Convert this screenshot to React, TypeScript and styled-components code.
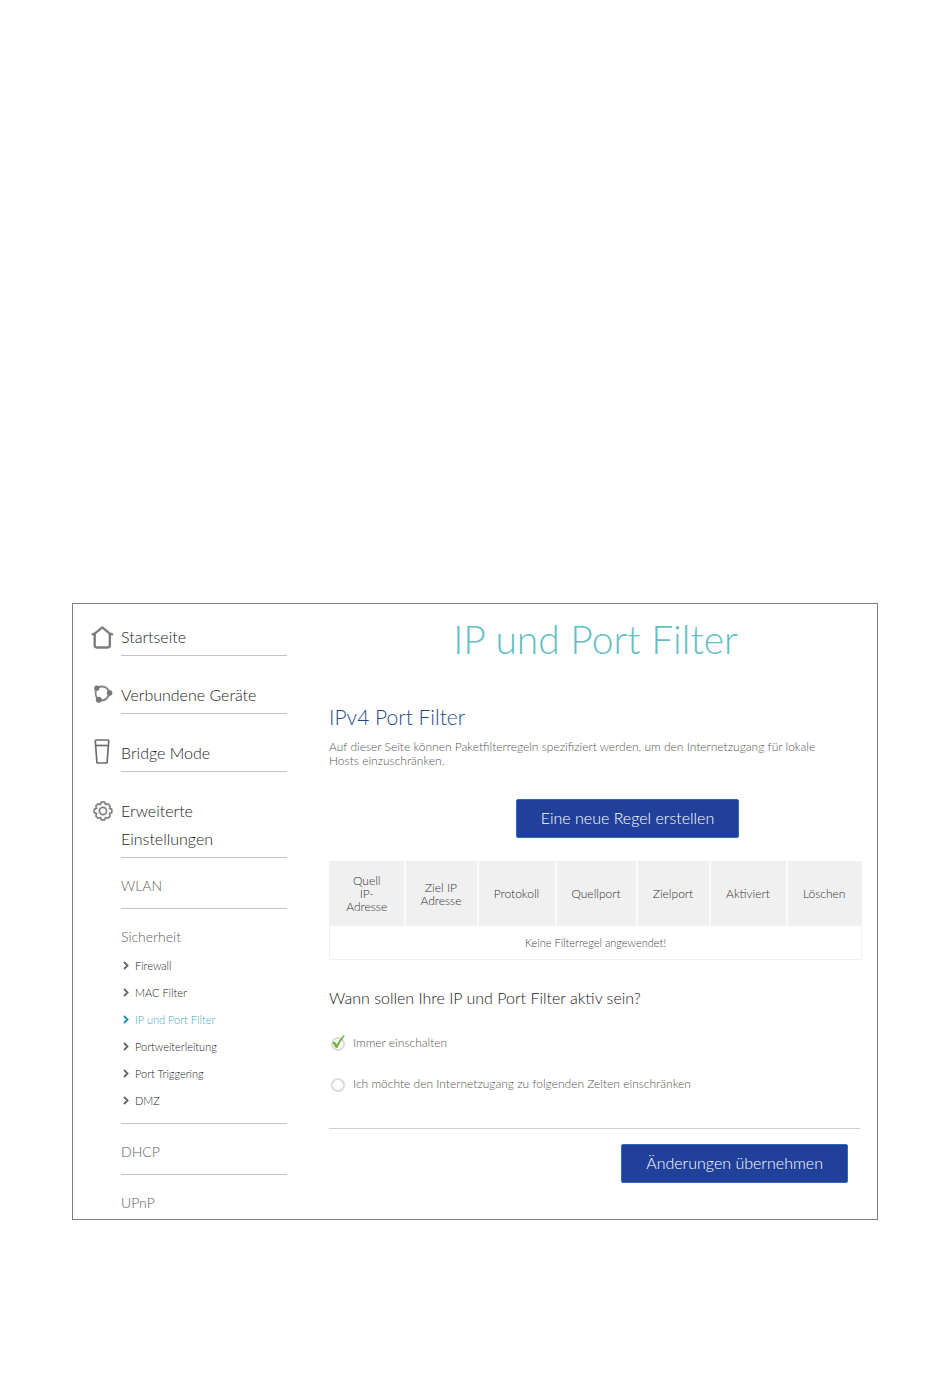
import React from "react";
import styled, { createGlobalStyle } from "styled-components";

const GlobalStyle = createGlobalStyle`
  * { box-sizing: border-box; }
  body {
    margin: 0;
    background: #fff;
    color: #333;
    font-family: Lato, "Open Sans", sans-serif;
    font-weight: 300;
  }
`;

const Page = styled.div`
  padding: 603px 72px 172px;
`;

const Frame = styled.div`
  display: grid;
  grid-template-columns: 196px minmax(0, 1fr);
  column-gap: 42px;
  padding: 0 15px 0 18px;
  border: 1px solid #808084;
`;

const Sidebar = styled.nav`
  padding: 19px 0 2px;
`;

const List = styled.ul`
  margin: 0;
  padding: 0;
  list-style: none;
`;

const SubList = styled(List)`
  padding: 1px 0;
`;

const NavItem = styled.li`
  display: grid;
  grid-template-columns: 24px minmax(0, 1fr);
  column-gap: 6px;
  margin-bottom: 25px;

  &:last-child {
    margin-bottom: 0;
  }
`;

const IconSlot = styled.span`
  display: flex;
  justify-content: center;
  align-items: center;
  height: 28px;
`;

const NavLink = styled.a`
  display: block;
  padding-bottom: 4px;
  border-bottom: 1px solid #c4c4c4;
  color: #222;
  font-size: 16px;
  line-height: 28px;
  text-decoration: none;
`;

const SectionItem = styled.li`
  margin-top: 14px;
  padding-bottom: 8px;
  border-bottom: 1px solid #c4c4c4;

  &:last-child {
    padding-bottom: 0;
    border-bottom: 0;
  }
`;

const SectionLink = styled.a`
  display: block;
  color: #606060;
  font-size: 14px;
  line-height: 28px;
  text-decoration: none;
`;

const SubLink = styled.a<{ $active?: boolean }>`
  display: flex;
  align-items: center;
  gap: 6px;
  padding-left: 2px;
  color: ${(p) => (p.$active ? "#3fabc4" : "#222")};
  font-size: 11px;
  line-height: 27px;
  text-decoration: none;

  svg {
    color: ${(p) => (p.$active ? "#1f8fb0" : "#666")};
  }
`;

const Main = styled.main`
  min-width: 0;
`;

const Title = styled.h1`
  margin: 0;
  padding-top: 8px;
  color: #62c0c4;
  font-size: 39px;
  font-weight: 300;
  line-height: 54px;
  text-align: center;
`;

const SectionTitle = styled.h2`
  margin: 36px 0 0;
  color: #1f4a86;
  font-size: 21px;
  font-weight: 300;
  line-height: 30px;
`;

const Intro = styled.p`
  margin: 8px 0 0;
  padding-right: 20px;
  color: #555;
  font-size: 12px;
  line-height: 14px;
`;

const CreateBar = styled.div`
  display: flex;
  justify-content: center;
  padding: 31px 14px 0 78px;
`;

const ApplyBar = styled.div`
  display: flex;
  justify-content: flex-end;
  padding: 15px 14px 0;
`;

const Button = styled.button`
  height: 39px;
  padding: 0 24px 2px;
  border: 1px solid #2a6cc4;
  border-radius: 2px;
  background: #21409a;
  color: #fff;
  font: inherit;
  font-size: 16px;
  white-space: nowrap;
`;

const Table = styled.table`
  width: 100%;
  margin-top: 23px;
  border: 1px solid #f0f0f0;
  border-collapse: collapse;
  table-layout: fixed;
`;

const HeadCell = styled.th`
  height: 64px;
  padding: 0 14px;
  border-right: 2px solid #fafafa;
  background: #f0f0f0;
  color: #333;
  font-size: 12px;
  font-weight: 300;
  line-height: 13px;
  white-space: pre-line;

  &:last-child {
    border-right: 0;
  }
`;

const EmptyCell = styled.td`
  height: 34px;
  padding: 0;
  color: #444;
  font-size: 11px;
  text-align: center;
`;

const Question = styled.fieldset`
  margin: 24px 0 0;
  padding: 0;
  border: 0;
`;

const Legend = styled.legend`
  padding: 0;
  color: #222;
  font-size: 16px;
  line-height: 28px;
`;

const Option = styled.label`
  display: grid;
  grid-template-columns: 18px minmax(0, 1fr);
  column-gap: 6px;
  align-items: center;
  margin-top: 21px;
  color: #555;
  font-size: 12px;
  line-height: 20px;
`;

const RadioBox = styled.span`
  position: relative;
  display: flex;
  justify-content: center;
  height: 16px;

  svg {
    position: absolute;
    inset: 0;
    pointer-events: none;
  }
`;

const Radio = styled.input`
  appearance: none;
  width: 14px;
  height: 14px;
  margin: 2px 0 0;
  border: 2px solid #dcdcdf;
  border-radius: 50%;
  background: #fff;
`;

const Divider = styled.hr`
  margin: 34px 2px 0 0;
  border: 0;
  border-top: 1px solid #cfcfcf;
`;

const HomeIcon = () => (
  <svg width="26" height="26" viewBox="0 0 26 26" fill="none" stroke="#7c7c7c" strokeWidth="2.6" strokeLinecap="round" strokeLinejoin="round" aria-hidden="true">
    <path d="M1.8 10 L4 9.3 L12.2 2.6 L20.4 9.3 L22.8 10" />
    <path d="M4 10 V22 Q4 24.3 6.3 24.3 H18.1 Q20.4 24.3 20.4 22 V10" />
  </svg>
);

const DevicesIcon = () => (
  <svg width="20" height="20" viewBox="0 0 20 20" fill="none" stroke="#858585" strokeWidth="2" aria-hidden="true">
    <path d="M3.4 3.4 C7 0.6 12 1 14.2 3.6 L17.4 8 L14.2 12.6 C12 15.6 9 16 5.6 15 C2.4 12 2 7 3.4 3.4Z" />
    <circle cx="3.8" cy="3.2" r="2.6" fill="#777" stroke="none" />
    <circle cx="16.6" cy="8" r="2.8" fill="#777" stroke="none" />
    <circle cx="5.8" cy="14.8" r="3" fill="#777" stroke="none" />
  </svg>
);

const BridgeIcon = () => (
  <svg width="18" height="30" viewBox="0 0 18 30" fill="none" stroke="#6e6e6e" strokeWidth="1.7" strokeLinejoin="round" aria-hidden="true">
    <path d="M2.5 2 H13.5 Q14.8 2 14.7 3.5 L13 25 H3 L1.3 3.5 Q1.2 2 2.5 2Z" />
    <path d="M1.8 7.5 H14.2" />
  </svg>
);

const GearIcon = () => (
  <svg width="20" height="20" viewBox="0 0 20 20" fill="none" stroke="#808080" strokeWidth="1.7" strokeLinejoin="round" aria-hidden="true">
    <path d="M8.2 1.2 H11.8 L12.5 3.4 L15 2.8 L17.2 5 L16.4 7.4 L18.8 8.4 V11.6 L16.4 12.6 L17.2 15 L15 17.2 L12.5 16.5 L11.8 18.8 H8.2 L7.5 16.5 L5 17.2 L2.8 15 L3.6 12.6 L1.2 11.6 V8.4 L3.6 7.4 L2.8 5 L5 2.8 L7.5 3.4Z" />
    <circle cx="10" cy="10" r="3.6" />
  </svg>
);

const Chevron = () => (
  <svg width="6" height="9" viewBox="0 0 6 9" fill="none" stroke="currentColor" strokeWidth="1.8" aria-hidden="true">
    <path d="M1 1 L4.6 4.5 L1 8" />
  </svg>
);

const Tick = () => (
  <svg width="18" height="16" viewBox="0 0 18 16" aria-hidden="true">
    <path d="M3.2 7.4 L5.8 6.4 L7.6 9.4 Q10.5 4 14.8 0 L15.8 0.8 Q11.2 6.8 8.4 13 L6.8 13Z" fill="#72b53a" />
  </svg>
);

const subItems = ["Firewall", "MAC Filter", "IP und Port Filter", "Portweiterleitung", "Port Triggering", "DMZ"];

const columns = [
  { label: "Quell\nIP-\nAdresse", width: 75 },
  { label: "Ziel IP Adresse", width: 73 },
  { label: "Protokoll", width: 78 },
  { label: "Quellport", width: 81 },
  { label: "Zielport", width: 73 },
  { label: "Aktiviert", width: 77 },
  { label: "Löschen", width: 75 },
];

const mainItems = [
  { label: "Startseite", icon: <HomeIcon /> },
  { label: "Verbundene Geräte", icon: <DevicesIcon /> },
  { label: "Bridge Mode", icon: <BridgeIcon /> },
];

export default function App() {
  return (
    <Page>
      <GlobalStyle />
      <Frame>
        <Sidebar>
          <List>
            {mainItems.map((item) => (
              <NavItem key={item.label}>
                <IconSlot>{item.icon}</IconSlot>
                <NavLink href="#">{item.label}</NavLink>
              </NavItem>
            ))}
            <NavItem>
              <IconSlot><GearIcon /></IconSlot>
              <div>
                <NavLink href="#">Erweiterte Einstellungen</NavLink>
                <List>
                  <SectionItem><SectionLink href="#">WLAN</SectionLink></SectionItem>
                  <SectionItem>
                    <SectionLink href="#">Sicherheit</SectionLink>
                    <SubList>
                      {subItems.map((label) => (
                        <li key={label}>
                          <SubLink href="#" $active={label === "IP und Port Filter"}>
                            <Chevron />
                            {label}
                          </SubLink>
                        </li>
                      ))}
                    </SubList>
                  </SectionItem>
                  <SectionItem><SectionLink href="#">DHCP</SectionLink></SectionItem>
                  <SectionItem><SectionLink href="#">UPnP</SectionLink></SectionItem>
                </List>
              </div>
            </NavItem>
          </List>
        </Sidebar>
        <Main>
          <Title>IP und Port Filter</Title>
          <SectionTitle>IPv4 Port Filter</SectionTitle>
          <Intro>
            Auf dieser Seite können Paketfilterregeln spezifiziert werden, um den Internetzugang für lokale Hosts einzuschränken.
          </Intro>
          <CreateBar>
            <Button type="button">Eine neue Regel erstellen</Button>
          </CreateBar>
          <Table>
            <colgroup>
              {columns.map((c) => <col key={c.label} width={c.width} />)}
            </colgroup>
            <thead>
              <tr>
                {columns.map((c) => <HeadCell key={c.label} scope="col">{c.label}</HeadCell>)}
              </tr>
            </thead>
            <tbody>
              <tr><EmptyCell colSpan={7}>Keine Filterregel angewendet!</EmptyCell></tr>
            </tbody>
          </Table>
          <Question>
            <Legend>Wann sollen Ihre IP und Port Filter aktiv sein?</Legend>
            <Option>
              <RadioBox>
                <Radio type="radio" name="schedule" defaultChecked />
                <Tick />
              </RadioBox>
              Immer einschalten
            </Option>
            <Option>
              <RadioBox>
                <Radio type="radio" name="schedule" />
              </RadioBox>
              Ich möchte den Internetzugang zu folgenden Zeiten einschränken
            </Option>
          </Question>
          <Divider />
          <ApplyBar>
            <Button type="button">Änderungen übernehmen</Button>
          </ApplyBar>
        </Main>
      </Frame>
    </Page>
  );
}
